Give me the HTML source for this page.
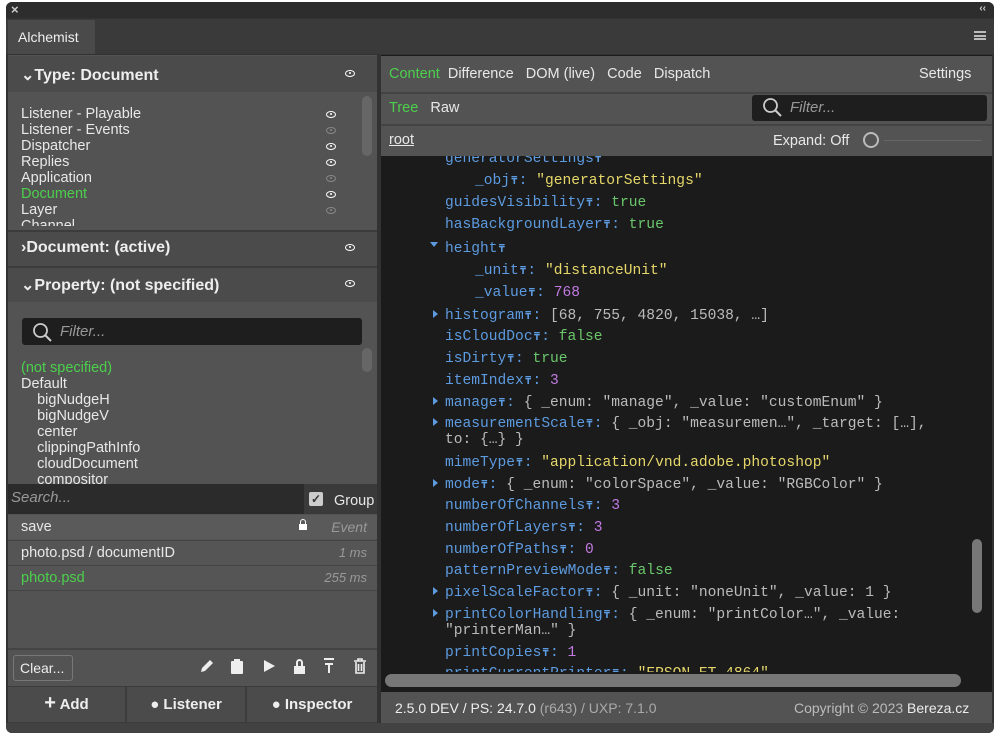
<!DOCTYPE html><html><head><style>
*{margin:0;padding:0;box-sizing:border-box}
body{width:1000px;height:740px;background:#fff;font-family:"Liberation Sans",sans-serif;position:relative;overflow:hidden}
.a{position:absolute}
.win{left:6px;top:2px;width:988px;height:731px;background:#323232;border-radius:6px;overflow:hidden}
.t{color:#e8e8e8;font-size:14.5px}
.hd{background:#4b4b4b;color:#eee;font-weight:bold;font-size:16px}
.eye{width:10px;height:7px;border:1.5px solid #fff;border-radius:50%/50%}
.eye:after{content:"";position:absolute;left:2.5px;top:1.2px;width:2px;height:2px;background:#fff;border-radius:50%}
.cw{position:absolute;left:375px;top:154px;width:590px;height:516px;overflow:hidden}
.cw div{position:absolute;font-family:"Liberation Mono",monospace;font-size:14.6px;line-height:18px;color:#bbb;white-space:pre}
.k{color:#5d9be0}.s{color:#e6d76a}.b{color:#6bc76b}.n{color:#c07ae0}
.p{color:#5d9be0;font-size:11px;font-weight:bold;margin:0 1px}
.tr{position:absolute;width:0;height:0}
.tr.r{border-left:5px solid #5d9be0;border-top:4px solid transparent;border-bottom:4px solid transparent}
.tr.d{border-top:5px solid #5d9be0;border-left:4px solid transparent;border-right:4px solid transparent}
</style></head><body>
<div class="a win">
 <div class="a" style="left:0;top:0;width:988px;height:16px;background:#2d2d2d"></div>
 <div class="a" style="left:5px;top:0;color:#ccc;font-size:13px;font-weight:bold">×</div>
 <div class="a" style="right:8px;top:1px;color:#ccc;font-size:10px;font-weight:bold">‹‹</div>
 <div class="a" style="left:0;top:17px;width:988px;height:35px;background:#3a3a3a"></div>
 <div class="a" style="left:2px;top:18px;width:87px;height:34px;background:#4a4a4a;color:#eee;font-size:14px;padding:9px 0 0 10px">Alchemist</div>
 <div class="a" style="right:8px;top:29px;width:12px;height:9px;border-top:2px solid #bbb;border-bottom:2px solid #bbb"></div>
 <div class="a" style="right:8px;top:33px;width:12px;height:2px;background:#bbb"></div>

 <!-- left panel -->
 <div class="a" style="left:2px;top:53px;width:369px;height:668px;background:#535353"></div>
 <div class="a hd" style="left:2px;top:54px;width:369px;height:36px;padding:9px 0 0 13px">⌄Type: Document</div>
 <div class="a eye" style="left:339px;top:68px"></div>
 <div class="a t" style="left:15px;top:104px;line-height:16px">Listener - Playable<br>Listener - Events<br>Dispatcher<br>Replies<br>Application<br><span style="color:#4cd04c">Document</span><br>Layer<br>Channel</div>
 <div class="a" style="left:2px;top:224px;width:369px;height:5px;background:#535353"></div>
 <div class="a eye" style="left:320px;top:109px"></div>
 <div class="a eye" style="left:320px;top:125px;opacity:.3"></div>
 <div class="a eye" style="left:320px;top:141px"></div>
 <div class="a eye" style="left:320px;top:157px"></div>
 <div class="a eye" style="left:320px;top:173px;opacity:.3"></div>
 <div class="a eye" style="left:320px;top:189px"></div>
 <div class="a eye" style="left:320px;top:205px;opacity:.3"></div>
 <div class="a" style="left:356px;top:94px;width:10px;height:60px;background:#666;border-radius:5px"></div>
 <div class="a" style="left:2px;top:228px;width:369px;height:2px;background:#3c3c3c"></div>
 <div class="a hd" style="left:2px;top:230px;width:369px;height:34px;padding:7px 0 0 13px">›Document: (active)</div>
 <div class="a eye" style="left:339px;top:242px"></div>
 <div class="a" style="left:2px;top:264px;width:369px;height:2px;background:#3c3c3c"></div>
 <div class="a hd" style="left:2px;top:266px;width:369px;height:34px;padding:7px 0 0 13px">⌄Property: (not specified)</div>
 <div class="a eye" style="left:339px;top:278px"></div>
 <div class="a" style="left:16px;top:316px;width:340px;height:27px;background:#1e1e1e;border-radius:3px;color:#999;font-style:italic;font-size:15px;padding:5px 0 0 38px">Filter...</div>
 <svg class="a" style="left:26px;top:320px" width="22" height="22"><circle cx="8.5" cy="8.5" r="6.5" stroke="#ccc" stroke-width="1.8" fill="none"/><path d="M13 13L19 19" stroke="#ccc" stroke-width="2"/></svg>
 <div class="a t" style="left:15px;top:358px;line-height:16px"><span style="color:#4cd04c">(not specified)</span><br>Default<br>&nbsp;&nbsp;&nbsp;&nbsp;bigNudgeH<br>&nbsp;&nbsp;&nbsp;&nbsp;bigNudgeV<br>&nbsp;&nbsp;&nbsp;&nbsp;center<br>&nbsp;&nbsp;&nbsp;&nbsp;clippingPathInfo<br>&nbsp;&nbsp;&nbsp;&nbsp;cloudDocument<br>&nbsp;&nbsp;&nbsp;&nbsp;compositor</div>
 <div class="a" style="left:356px;top:346px;width:10px;height:24px;background:#666;border-radius:5px"></div>
 <div class="a" style="left:2px;top:482px;width:369px;height:30px;background:#3a3a3a"></div>
 <div class="a" style="left:2px;top:482px;width:296px;height:30px;background:#2b2b2b;color:#999;font-style:italic;font-size:15px;padding:5px 0 0 3px">Search...</div>
 <div class="a" style="left:303px;top:490px;width:14px;height:14px;background:#ccc;border-radius:2px;color:#333;font-size:12px;line-height:14px;text-align:center;font-weight:bold">✓</div>
 <div class="a t" style="left:328px;top:491px">Group</div>
 <div class="a" style="left:2px;top:513px;width:369px;height:24px;background:#5a5a5a"></div>
 <div class="a t" style="left:15px;top:517px">save</div>
 <div class="a" style="left:293px;top:522px;width:8px;height:6px;background:#fff"></div><div class="a" style="left:294px;top:517px;width:6px;height:7px;border:1.5px solid #fff;border-radius:3px 3px 0 0"></div>
 <div class="a" style="right:627px;top:517px;color:#999;font-style:italic;font-size:14px">Event</div>
 <div class="a" style="left:2px;top:538px;width:369px;height:1px;background:#444"></div>
 <div class="a" style="left:2px;top:539px;width:369px;height:24px;background:#555"></div>
 <div class="a t" style="left:15px;top:543px">photo.psd / documentID</div>
 <div class="a" style="right:627px;top:543px;color:#999;font-style:italic;font-size:13px">1 ms</div>
 <div class="a" style="left:2px;top:563px;width:369px;height:1px;background:#444"></div>
 <div class="a" style="left:2px;top:564px;width:369px;height:24px;background:#555"></div>
 <div class="a t" style="left:15px;top:568px;color:#4cd04c">photo.psd</div>
 <div class="a" style="right:627px;top:568px;color:#999;font-style:italic;font-size:13px">255 ms</div>
 <div class="a" style="left:2px;top:588px;width:369px;height:1px;background:#444"></div>
 <div class="a" style="left:2px;top:646px;width:369px;height:2px;background:#444"></div>
 <div class="a" style="left:7px;top:653px;width:60px;height:26px;border:1px solid #777;border-radius:3px;color:#eee;font-size:14px;padding:4px 0 0 6px">Clear...</div>
 <svg class="a" style="left:193px;top:656px" width="16" height="16"><path d="M2 14L3 10L11 2L14 5L6 13Z" fill="#eee"/></svg>
 <div class="a" style="left:225px;top:659px;width:12px;height:13px;background:#eee;border-radius:1px"></div>
 <div class="a" style="left:228px;top:657px;width:6px;height:3px;background:#eee"></div>
 <div class="a" style="left:258px;top:658px;width:0;height:0;border-left:11px solid #eee;border-top:6px solid transparent;border-bottom:6px solid transparent"></div>
 <div class="a" style="left:288px;top:664px;width:11px;height:8px;background:#eee"></div><div class="a" style="left:290px;top:657px;width:7px;height:9px;border:2px solid #eee;border-radius:4px 4px 0 0"></div>
 <svg class="a" style="left:316px;top:656px" width="14" height="16"><path d="M2 1H12M3 6H11M7 6V15" stroke="#eee" stroke-width="2"/></svg>
 <svg class="a" style="left:347px;top:656px" width="14" height="16"><path d="M1 3H13M5 3V1H9V3M3 4V15H11V4M5.5 6V13M8.5 6V13" stroke="#eee" stroke-width="1.6" fill="none"/></svg>
 <div class="a" style="left:2px;top:684px;width:369px;height:37px;background:#3c3c3c"></div>
 <div class="a" style="left:2px;top:685px;width:117px;height:35px;background:#4b4b4b;color:#eee;font-weight:bold;font-size:15px;text-align:center;padding-top:9px"><b style="font-size:20px;line-height:10px">+</b> Add</div>
 <div class="a" style="left:121px;top:685px;width:118px;height:35px;background:#4b4b4b;color:#eee;font-weight:bold;font-size:15px;text-align:center;padding-top:9px">● Listener</div>
 <div class="a" style="left:241px;top:685px;width:130px;height:35px;background:#4b4b4b;color:#eee;font-weight:bold;font-size:15px;text-align:center;padding-top:9px">● Inspector</div>

 <!-- right -->
 <div class="a" style="left:375px;top:53px;width:611px;height:668px;background:#1b1b1b"></div>
 <div class="a" style="left:375px;top:54px;width:611px;height:36px;background:#535353"></div>
 <div class="a t" style="left:383px;top:64px"><span style="color:#4cd04c">Content</span>&nbsp; Difference&nbsp;&nbsp; DOM (live)&nbsp;&nbsp; Code&nbsp;&nbsp; Dispatch</div>
 <div class="a t" style="left:913px;top:64px">Settings</div>
 <div class="a" style="left:375px;top:90px;width:611px;height:2px;background:#444"></div>
 <div class="a" style="left:375px;top:92px;width:611px;height:30px;background:#535353"></div>
 <div class="a t" style="left:383px;top:98px"><span style="color:#4cd04c">Tree</span>&nbsp;&nbsp; Raw</div>
 <div class="a" style="left:746px;top:93px;width:235px;height:26px;background:#1e1e1e;border-radius:3px;color:#999;font-style:italic;font-size:15px;padding:4px 0 0 38px">Filter...</div>
 <svg class="a" style="left:756px;top:95px" width="22" height="22"><circle cx="8.5" cy="8.5" r="6.5" stroke="#ccc" stroke-width="1.8" fill="none"/><path d="M13 13L19 19" stroke="#ccc" stroke-width="2"/></svg>
 <div class="a" style="left:375px;top:122px;width:611px;height:2px;background:#444"></div>
 <div class="a" style="left:375px;top:124px;width:611px;height:30px;background:#535353"></div>
 <div class="a t" style="left:383px;top:130px;text-decoration:underline">root</div>
 <div class="a t" style="left:767px;top:131px">Expand: Off</div>
 <div class="a" style="left:857px;top:130px;width:16px;height:16px;border:2px solid #bbb;border-radius:50%"></div>
 <div class="a" style="left:878px;top:138px;width:98px;height:1px;background:#666"></div>

 <div class="cw">
  <div style="left:64px;top:-6px"><span class="k">generatorSettings</span><span class="p">₸</span></div>
  <div style="left:94px;top:16px"><span class="k">_obj</span><span class="p">₸</span><span class="k">:</span> <span class="s">"generatorSettings"</span></div>
  <div style="left:64px;top:38px"><span class="k">guidesVisibility</span><span class="p">₸</span><span class="k">:</span> <span class="b">true</span></div>
  <div style="left:64px;top:60px"><span class="k">hasBackgroundLayer</span><span class="p">₸</span><span class="k">:</span> <span class="b">true</span></div>
  <i class="tr d" style="left:49px;top:86px"></i>
  <div style="left:64px;top:84px"><span class="k">height</span><span class="p">₸</span></div>
  <div style="left:94px;top:106px"><span class="k">_unit</span><span class="p">₸</span><span class="k">:</span> <span class="s">"distanceUnit"</span></div>
  <div style="left:94px;top:128px"><span class="k">_value</span><span class="p">₸</span><span class="k">:</span> <span class="n">768</span></div>
  <i class="tr r" style="left:52px;top:154px"></i>
  <div style="left:64px;top:151px"><span class="k">histogram</span><span class="p">₸</span><span class="k">:</span> [68, 755, 4820, 15038, …]</div>
  <div style="left:64px;top:172px"><span class="k">isCloudDoc</span><span class="p">₸</span><span class="k">:</span> <span class="b">false</span></div>
  <div style="left:64px;top:194px"><span class="k">isDirty</span><span class="p">₸</span><span class="k">:</span> <span class="b">true</span></div>
  <div style="left:64px;top:216px"><span class="k">itemIndex</span><span class="p">₸</span><span class="k">:</span> <span class="n">3</span></div>
  <i class="tr r" style="left:52px;top:241px"></i>
  <div style="left:64px;top:238px"><span class="k">manage</span><span class="p">₸</span><span class="k">:</span> { _enum: "manage", _value: "customEnum" }</div>
  <i class="tr r" style="left:52px;top:262px"></i>
  <div style="left:64px;top:259px"><span class="k">measurementScale</span><span class="p">₸</span><span class="k">:</span> { _obj: "measuremen…", _target: […],</div>
  <div style="left:64px;top:275px">to: {…} }</div>
  <div style="left:64px;top:298px"><span class="k">mimeType</span><span class="p">₸</span><span class="k">:</span> <span class="s">"application/vnd.adobe.photoshop"</span></div>
  <i class="tr r" style="left:52px;top:323px"></i>
  <div style="left:64px;top:320px"><span class="k">mode</span><span class="p">₸</span><span class="k">:</span> { _enum: "colorSpace", _value: "RGBColor" }</div>
  <div style="left:64px;top:341px"><span class="k">numberOfChannels</span><span class="p">₸</span><span class="k">:</span> <span class="n">3</span></div>
  <div style="left:64px;top:363px"><span class="k">numberOfLayers</span><span class="p">₸</span><span class="k">:</span> <span class="n">3</span></div>
  <div style="left:64px;top:385px"><span class="k">numberOfPaths</span><span class="p">₸</span><span class="k">:</span> <span class="n">0</span></div>
  <div style="left:64px;top:406px"><span class="k">patternPreviewMode</span><span class="p">₸</span><span class="k">:</span> <span class="b">false</span></div>
  <i class="tr r" style="left:52px;top:431px"></i>
  <div style="left:64px;top:428px"><span class="k">pixelScaleFactor</span><span class="p">₸</span><span class="k">:</span> { _unit: "noneUnit", _value: 1 }</div>
  <i class="tr r" style="left:52px;top:453px"></i>
  <div style="left:64px;top:450px"><span class="k">printColorHandling</span><span class="p">₸</span><span class="k">:</span> { _enum: "printColor…", _value:</div>
  <div style="left:64px;top:466px">"printerMan…" }</div>
  <div style="left:64px;top:488px"><span class="k">printCopies</span><span class="p">₸</span><span class="k">:</span> <span class="n">1</span></div>
  <div style="left:64px;top:509px"><span class="k">printCurrentPrinter</span><span class="p">₸</span><span class="k">:</span> <span class="s">"EPSON ET-4864"</span></div>
 </div>
 <div class="a" style="left:966px;top:537px;width:10px;height:74px;background:#777;border-radius:5px"></div>
 <div class="a" style="left:379px;top:672px;width:576px;height:13px;background:#777;border-radius:7px"></div>
 <div class="a" style="left:375px;top:690px;width:611px;height:31px;background:#535353"></div>
 <div class="a" style="left:389px;top:698px;font-size:14px;color:#eee">2.5.0 DEV / PS: 24.7.0 <span style="color:#aaa">(r643) / UXP: 7.1.0</span></div>
 <div class="a" style="left:788px;top:698px;font-size:14px;color:#bbb">Copyright © 2023 <span style="color:#eee">Bereza.cz</span></div>
 <div class="a" style="left:0;top:721px;width:988px;height:10px;background:#424242"></div>
</div>
</body></html>
